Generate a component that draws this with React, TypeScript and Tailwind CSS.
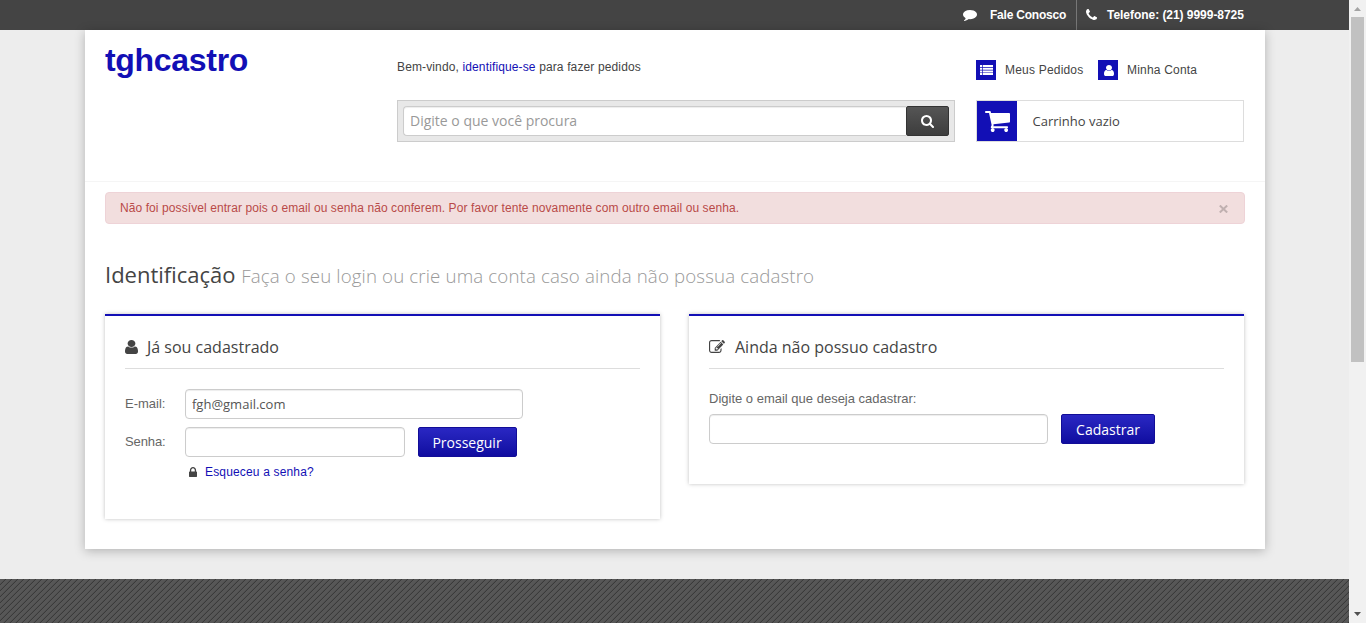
import type { ReactNode } from "react";

const icons = {
  user: "M1280 1399q0 109-62.5 187t-150.5 78h-854q-88 0-150.5-78t-62.5-187q0-85 8.5-160.5t31.5-152 58.5-131 94-89 134.5-34.5q131 128 313 128t313-128q76 0 134.5 34.5t94 89 58.5 131 31.5 152 8.5 160.5zm-256-887q0 159-112.5 271.5t-271.5 112.5-271.5-112.5-112.5-271.5 112.5-271.5 271.5-112.5 271.5 112.5 112.5 271.5z",
  cart: "M704 1536q0 52-38 90t-90 38-90-38-38-90 38-90 90-38 90 38 38 90zm896 0q0 52-38 90t-90 38-90-38-38-90 38-90 90-38 90 38 38 90zm128-1088v512q0 24-16.5 42.5t-40.5 21.5l-1044 122q13 60 13 70 0 16-24 64h920q26 0 45 19t19 45-19 45-45 19h-1024q-26 0-45-19t-19-45q0-11 8-31.5t16-36 21.5-40 15.5-29.5l-177-823h-204q-26 0-45-19t-19-45 19-45 45-19h256q16 0 28.5 6.5t19.5 15.5 13 24.5 8 26 5.5 29.5 4.5 26h1201q26 0 45 19t19 45z",
  search: "M1216 832q0-185-131.5-316.5t-316.5-131.5-316.5 131.5-131.5 316.5 131.5 316.5 316.5 131.5 316.5-131.5 131.5-316.5zm512 832q0 52-38 90t-90 38q-54 0-90-38l-343-342q-179 124-399 124-143 0-273.5-55.5t-225-150-150-225-55.5-273.5 55.5-273.5 150-225 225-150 273.5-55.5 273.5 55.5 225 150 150 225 55.5 273.5q0 220-124 399l343 343q37 37 37 90z",
  lock: "M640 768h512v-192q0-106-75-181t-181-75-181 75-75 181v192zm832 96v576q0 40-28 68t-68 28h-960q-40 0-68-28t-28-68v-576q0-40 28-68t68-28h32v-192q0-184 132-316t316-132 316 132 132 316v192h32q40 0 68 28t28 68z",
  phone: "M1600 1240q0 27-10 70.5t-21 68.5q-21 50-122 106-94 51-186 51-27 0-52.5-3.5t-57.5-12.5-47.5-14.5-55.5-20.5-49-18q-98-35-175-83-128-79-264.5-215.5t-215.5-264.5q-48-77-83-175-3-9-18-49t-20.5-55.5-14.5-47.5-12.5-57.5-3.5-52.5q0-92 51-186 56-101 106-122 25-11 68.5-21t70.5-10q14 0 21 3 18 6 53 76 11 19 30 54t35 63.5 31 53.5q3 4 17.5 25t21.5 35.5 7 28.5q0 20-28.5 50t-62 55-62 53-28.5 46q0 9 5 22.5t8.5 20.5 14 24 11.5 19q76 137 174 235t235 174q2 1 19 11.5t24 14 20.5 8.5 22.5 5q18 0 46-28.5t53-62 55-62 50-28.5q14 0 28.5 7t35.5 21.5 25 17.5q25 15 53.5 31t63.5 35 54 30q70 35 76 53 3 7 3 21z",
  comment: "M1792 896q0 174-120 321.5t-326 233-450 85.5q-70 0-145-8-198 175-460 242-49 14-114 22-17 2-30.5-9t-17.5-29v-1q-3-4-.5-12t2-10 4.5-9.5l6-9 7-8.5 8-9q7-8 31-34.5t34.5-38 31-39.5 32.5-51 27-59 26-76q-157-89-247.5-220t-90.5-281q0-130 71-248.5t191-204.5 286-136.5 348-50.5q244 0 450 85.5t326 233 120 321.5z",
  edit: "M888 1184l116-116-152-152-116 116v56h96v96h56zm440-720q-16-16-33 1l-350 350q-17 17-1 33t33-1l350-350q17-17 1-33zm80 594v190q0 119-84.5 203.5t-203.5 84.5h-832q-119 0-203.5-84.5t-84.5-203.5v-832q0-119 84.5-203.5t203.5-84.5h832q63 0 117 25 15 7 18 23 3 17-9 29l-49 49q-14 14-32 8-23-6-45-6h-832q-66 0-113 47t-47 113v832q0 66 47 113t113 47h832q66 0 113-47t47-113v-126q0-13 9-22l64-64q15-15 35-7t20 29zm-96-738l288 288-672 672h-288v-288zm444 132l-92 92-288-288 92-92q28-28 68-28t68 28l152 152q28 28 28 68t-28 68z",
};

function Icon({ name, box, className }: { name: keyof typeof icons; box: string; className: string }) {
  return (
    <svg viewBox={box} preserveAspectRatio="none" fill="currentColor" className={`shrink-0 ${className}`}>
      <path d={icons[name]} />
    </svg>
  );
}

function Panel({ icon, title, className, children }: { icon: ReactNode; title: ReactNode; className: string; children: ReactNode }) {
  return (
    <section className={`border-t-2 border-[#120fb5] bg-white px-5 shadow-[0_0_4px_rgba(0,0,0,0.25)] ${className}`}>
      <h2 className="flex h-[53px] items-center border-b border-[#ddd] pt-[9px] font-['Open_Sans',sans-serif] text-[16px] text-[#444]">
        {icon}
        {title}
      </h2>
      {children}
    </section>
  );
}

const field =
  "h-[30px] rounded border border-[#ccc] bg-white px-[6px] font-['Open_Sans',sans-serif] text-[13px] text-[#555] shadow-[inset_0_1px_1px_rgba(0,0,0,0.075)] outline-none";
const button =
  "h-[30px] rounded-[2px] border border-[#120d97] bg-linear-to-b from-[#2a27c3] to-[#100ca0] font-['Open_Sans',sans-serif] text-[14px] text-white";

export default function App() {
  return (
    <div className="flex h-[623px] w-[1366px] overflow-hidden bg-[#ededed] font-['Liberation_Sans',Arial,sans-serif] text-[12px] text-[#444]">
      <div className="flex w-[1349px] flex-col">
        <div className="h-[30px] shrink-0 bg-[#444] font-bold text-white">
          <div className="ml-[85px] flex h-[30px] w-[1160px] justify-end">
            <a className="flex items-center border-r border-[#777] pr-[10px]">
              <Icon name="comment" box="0 128 1792 1664" className="mr-[13px] h-[12px] w-[14px]" />
              <span className="w-[76px] whitespace-nowrap tracking-[-0.22px]">Fale Conosco</span>
            </a>
            <a className="flex items-center pl-[9px]">
              <Icon name="phone" box="192 128 1408 1408" className="mr-[10px] mb-[2px] h-[11px] w-[11px]" />
              <span className="w-[138px] whitespace-nowrap tracking-[-0.04px]">Telefone: (21) 9999-8725</span>
            </a>
          </div>
        </div>

        <div className="ml-[85px] h-[519px] w-[1180px] shrink-0 bg-white shadow-[0_2px_10px_rgba(0,0,0,0.25)]">
          <header className="flex h-[152px] border-b border-[#f5f5f5] pl-5">
            <div className="w-[292px] pt-[11px]">
              <h1 className="text-[32px] leading-[38px] font-bold tracking-[-0.3px] text-[#120fb5]">tghcastro</h1>
            </div>
            <div className="w-[579px] pt-[28px]">
              <p className="h-[42px] leading-[18px] tracking-[0.13px]">
                Bem-vindo, <a className="text-[#120fb5]">identifique-se</a> para fazer pedidos
              </p>
              <form className="flex h-[42px] w-[558px] border border-[#ccc] bg-[#e8e8e8] p-[5px]">
                <input
                  placeholder="Digite o que você procura"
                  className="h-[30px] w-[504px] rounded-l border border-r-0 border-[#ccc] bg-white px-[6px] pb-[2px] font-['Open_Sans',sans-serif] text-[14px] shadow-[inset_0_1px_1px_rgba(0,0,0,0.075)] outline-none placeholder:text-[#999]"
                />
                <button className="flex h-[30px] w-[43px] items-center justify-center rounded-[2px] border border-[#333] bg-linear-to-b from-[#555] to-[#3d3d3d] text-white">
                  <Icon name="search" box="64 128 1664 1664" className="h-[13px] w-[13px]" />
                </button>
              </form>
            </div>
            <div className="w-[268px] pt-[30px]">
              <nav className="flex h-[40px]">
                <a className="flex h-5 w-[122px] items-center">
                  <span className="mr-[9px] flex size-5 items-center justify-center bg-[#120fb5] text-white">
                    <svg viewBox="0 0 13 10" className="mb-px h-[10px] w-[13px]" fill="currentColor">
                      <path d="M0 0h2v2H0zM2.7 0H13v2H2.7zM0 2.7h2v2H0zM2.7 2.7H13v2H2.7zM0 5.4h2v2H0zM2.7 5.4H13v2H2.7zM0 8.1h2V10H0zM2.7 8.1H13V10H2.7z" />
                    </svg>
                  </span>
                  <span className="tracking-[0.2px]">Meus Pedidos</span>
                </a>
                <a className="flex h-5 items-center">
                  <span className="mr-[9px] flex size-5 items-center justify-center bg-[#120fb5] text-white">
                    <Icon name="user" box="0 128 1280 1536" className="ml-px h-[11px] w-[10px]" />
                  </span>
                  <span className="tracking-[0.2px]">Minha Conta</span>
                </a>
              </nav>
              <a className="flex h-[42px] items-center border border-[#ddd] font-['Open_Sans',sans-serif] text-[13px]">
                <span className="mr-[15px] flex size-10 items-center justify-center bg-[#120fb5] text-white">
                  <Icon name="cart" box="64 256 1664 1408" className="ml-px h-[21px] w-[25px]" />
                </span>
                <span className="pt-[2px] pl-[0.5px]">Carrinho vazio</span>
              </a>
            </div>
          </header>

          <main className="px-5 pt-[10px]">
            <div className="flex h-[32px] items-center justify-between rounded border border-[#eed3d7] bg-[#f2dede] pr-[16px] pl-[14px] text-[#b94a48]">
              <span className="tracking-[0.085px]">Não foi possível entrar pois o email ou senha não conferem. Por favor tente novamente com outro email ou senha.</span>
              <svg viewBox="0 0 9 8" className="mt-px h-[8px] w-[9px] text-[#c0b0b0]" stroke="currentColor" strokeWidth="2">
                <path d="M.8.5l7.4 7M8.2.5L.8 7.5" />
              </svg>
            </div>
            <h1 className="mt-[33px] h-[37px] font-['Open_Sans',sans-serif] text-[22px] leading-[34px] whitespace-nowrap text-[#444]">
              <span>Identificação</span>{" "}
              <small className="text-[18.7px] font-light tracking-[0.13px] text-[#999]">Faça o seu login ou crie uma conta caso ainda não possua cadastro</small>
            </h1>
            <div className="mt-[20px] flex items-start gap-[29px]">
              <Panel
                className="h-[205px] w-[555px]"
                icon={<Icon name="user" box="0 128 1280 1536" className="mr-[9px] h-[14px] w-[13px]" />}
                title={<span>Já sou cadastrado</span>}
              >
                <div className="mt-[20px] flex items-center">
                  <label className="w-[60px] text-[13px] text-[#666]">E-mail:</label>
                  <input defaultValue="fgh@gmail.com" className={`w-[338px] ${field}`} />
                </div>
                <div className="mt-2 flex items-center">
                  <label className="w-[60px] text-[13px] tracking-[-0.1px] text-[#666]">Senha:</label>
                  <input type="password" className={`mr-[13px] w-[220px] ${field}`} />
                  <button className={`w-[99px] pr-px ${button}`}>Prosseguir</button>
                </div>
                <a className="mt-[6px] ml-[64px] flex items-center leading-[18px] text-[#120fb5]">
                  <Icon name="lock" box="320 128 1152 1408" className="mr-2 mb-px h-[10px] w-[8px] text-[#444]" />
                  <span className="tracking-[0.16px]">Esqueceu a senha?</span>
                </a>
              </Panel>
              <Panel
                className="h-[170px] w-[555px]"
                icon={<Icon name="edit" box="0 128 1792 1408" className="mr-[10px] h-[13px] w-[16px]" />}
                title={<span>Ainda não possuo cadastro</span>}
              >
                <label className="mt-[20px] block h-[25px] text-[13px] leading-[19px] text-[#666]">Digite o email que deseja cadastrar:</label>
                <div className="flex">
                  <input className={`mr-[13px] w-[339px] ${field}`} />
                  <button className={`w-[94px] ${button}`}>Cadastrar</button>
                </div>
              </Panel>
            </div>
          </main>
        </div>

        <footer className="mt-[30px] h-[44px] shrink-0 bg-[#575757]">
          <svg className="block h-full w-full" shapeRendering="crispEdges">
            <pattern id="stripes" width="6" height="6" patternUnits="userSpaceOnUse">
              <path fill="#3a3a3a" d="M5 0h1v1H5zM4 1h1v1H4zM3 2h1v1H3zM2 3h1v1H2zM1 4h1v1H1zM0 5h1v1H0z" />
              <path fill="#505050" d="M4 0h1v1H4zM3 1h1v1H3zM2 2h1v1H2zM1 3h1v1H1zM0 4h1v1H0zM5 5h1v1H5z" />
            </pattern>
            <rect width="100%" height="100%" fill="url(#stripes)" />
          </svg>
        </footer>
      </div>

      <div className="flex w-[17px] flex-col items-center justify-between bg-[#f1f1f1]">
        <svg viewBox="0 0 17 17" className="size-[17px]" fill="#a3a3a3">
          <path d="M8.5 7l3.5 4H5z" />
        </svg>
        <div className="mb-auto h-[345px] w-[13px] bg-[#c1c1c1]" />
        <svg viewBox="0 0 17 17" className="size-[17px]" fill="#505050">
          <path d="M8.5 10L12 6H5z" />
        </svg>
      </div>
    </div>
  );
}
